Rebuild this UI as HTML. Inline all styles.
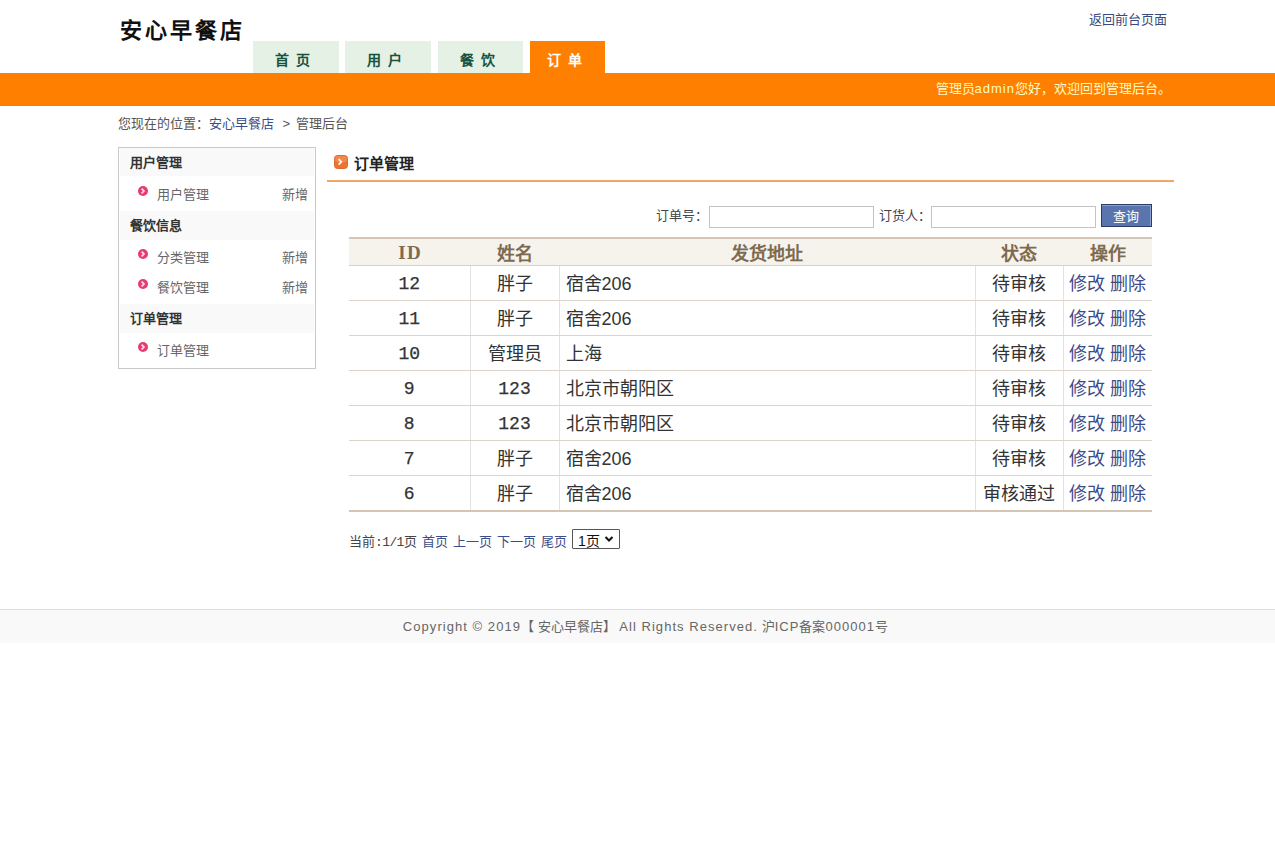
<!DOCTYPE html>
<html lang="zh-CN"><head><meta charset="utf-8"><title>安心早餐店</title>
<style>
*{margin:0;padding:0;box-sizing:border-box}
html,body{width:1275px;height:852px;background:#fff;overflow:hidden}
body{font-family:"Liberation Sans",sans-serif;font-size:13px;color:#333;position:relative}
.abs{position:absolute;white-space:nowrap}
#logo{left:120px;top:16px;font-size:22px;font-weight:bold;letter-spacing:3px;color:#111;line-height:30px}
.tab{position:absolute;top:41px;height:32px;background:#e4f1e4;color:#17523f;font-weight:bold;font-size:14px;letter-spacing:7px;text-align:center;line-height:38px;padding-left:0}
.tab.on{background:#ff8000;color:#fff}
#toplink{left:1089px;top:11px;color:#3b4a7c;font-size:13px;line-height:18px}
#bar{left:0;top:73px;width:1275px;height:33px;background:#ff8000}
#welcome{right:104px;top:81px;color:#fffac0;font-size:13px;line-height:16px}
#crumb{left:118px;top:115px;color:#555;line-height:18px}
#crumb a{color:#3b4c8a;text-decoration:none}
#side{left:118px;top:147px;width:198px;height:222px;border:1px solid #c9c9c9;padding:0 1px}
.sh{height:29px;background:#f9f9f9;font-weight:bold;color:#333;line-height:30px;padding-left:10px}
.ul{padding:2px 0}
.li{height:30px;line-height:32px;position:relative;color:#666;padding-left:37px}
.li .add{position:absolute;right:6px;top:0;color:#666}
.li .dot{position:absolute;left:18px;top:7px;width:10px;height:10px}
#title{left:354px;top:153px;font-size:15px;font-weight:bold;color:#222;line-height:22px}
#ticon{left:334px;top:155px;width:14px;height:14px}
#uline{left:327px;top:180px;width:847px;height:2px;background:#f0a765}
.lbl{top:207px;color:#444;line-height:18px}
.inp{top:206px;width:165px;height:22px;border:1px solid #c3c3c3;background:#fff}
#btn{left:1101px;top:204px;width:51px;height:23px;background:#5a75ad;border:1px solid #2c3d6a;box-shadow:inset -1px 1px 0 #8aa0cc;color:#fff;text-align:center;line-height:23px;padding-right:2px;font-size:13px}
#tbl{left:349px;top:237px;width:803px;border-collapse:collapse;table-layout:fixed;border-top:2px solid #d4c5b5;border-bottom:2px solid #d4c5b5}
#tbl th{height:27px;background:#f6f3ed;color:#7d6b50;font-size:18px;font-weight:bold;border-bottom:1px solid #d9d1c9;padding:0}
#tbl td{height:35px;border-bottom:1px solid #dad4cd;border-left:1px solid #e2e2e2;font-size:18px;color:#333;text-align:center;padding:0 0 2px}
#tbl td:first-child{border-left:none}
#tbl tr.last td{height:35px;border-bottom:none}
#tbl th.sid{font-family:"Liberation Serif",serif;font-size:19px}
#tbl td.idc{font-family:"Liberation Mono",monospace;font-size:18px;padding:2px 0 0;-webkit-text-stroke:0.25px #333}
#tbl td.addr{text-align:left;padding-left:6px}
#tbl a{color:#3b4c8a;text-decoration:none}
.pg{top:533px;color:#444;line-height:18px}
.pa{color:#3b4c8a}
#sel{left:572px;top:529px;width:48px;height:20px;border:1px solid #555;border-radius:1px;background:#fff}
.l{letter-spacing:1.05px}
#foot{left:0;top:609px;width:1275px;height:34px;padding-left:16px;background:#f9f9f9;border-top:1px solid #dedede;text-align:center;color:#666;line-height:34px;font-size:13px}
</style></head><body>
<div class="abs" id="logo">安心早餐店</div>
<div class="tab" style="left:253px;width:86px">首页</div>
<div class="tab" style="left:345px;width:86px">用户</div>
<div class="tab" style="left:438px;width:85px">餐饮</div>
<div class="tab on" style="left:530px;width:75px">订单</div>
<div class="abs" id="toplink">返回前台页面</div>
<div class="abs" id="bar"></div>
<div class="abs" id="welcome">管理员<span style="letter-spacing:1px">admin</span>您好，欢迎回到管理后台。</div>
<div class="abs" id="crumb">您现在的位置：<a>安心早餐店</a><span style="margin:0 2px 0 5px"> &gt; </span>管理后台</div>

<div class="abs" id="side">
  <div class="sh" style="height:28px;line-height:29px">用户管理</div>
  <div class="ul" style="padding-top:3px"><div class="li"><svg class="dot" viewBox="0 0 10 10"><circle cx="5" cy="5" r="5" fill="#e63c72"/><path d="M3.6 2.6 L6 5 L3.6 7.4" stroke="#fde" stroke-width="1.7" fill="none"/></svg>用户管理<span class="add">新增</span></div></div>
  <div class="sh">餐饮信息</div>
  <div class="ul"><div class="li"><svg class="dot" viewBox="0 0 10 10"><circle cx="5" cy="5" r="5" fill="#e63c72"/><path d="M3.6 2.6 L6 5 L3.6 7.4" stroke="#fde" stroke-width="1.7" fill="none"/></svg>分类管理<span class="add">新增</span></div>
  <div class="li"><svg class="dot" viewBox="0 0 10 10"><circle cx="5" cy="5" r="5" fill="#e63c72"/><path d="M3.6 2.6 L6 5 L3.6 7.4" stroke="#fde" stroke-width="1.7" fill="none"/></svg>餐饮管理<span class="add">新增</span></div></div>
  <div class="sh">订单管理</div>
  <div class="ul"><div class="li"><svg class="dot" viewBox="0 0 10 10"><circle cx="5" cy="5" r="5" fill="#e63c72"/><path d="M3.6 2.6 L6 5 L3.6 7.4" stroke="#fde" stroke-width="1.7" fill="none"/></svg>订单管理</div></div>
</div>

<svg class="abs" id="ticon" viewBox="0 0 14 14"><rect x="0.5" y="0.5" width="13" height="13" rx="3" fill="#ec7230" stroke="#dc6a30" stroke-width="1"/><rect x="1" y="1" width="12" height="6" rx="2.5" fill="#f59a60" opacity="0.6"/><path d="M4.6 4.2 L7.3 6.9 L4.6 9.6" stroke="#fff6ea" stroke-width="1.9" fill="none"/></svg>
<div class="abs" id="title">订单管理</div>
<div class="abs" id="uline"></div>

<div class="abs lbl" style="left:656px">订单号：</div>
<div class="abs inp" style="left:709px"></div>
<div class="abs lbl" style="left:879px">订货人：</div>
<div class="abs inp" style="left:931px"></div>
<div class="abs" id="btn">查询</div>

<table class="abs" id="tbl">
<colgroup><col style="width:121px"><col style="width:89px"><col style="width:416px"><col style="width:88px"><col style="width:89px"></colgroup>
<tr><th class="sid"><span style="position:relative;top:1px;letter-spacing:1.5px;margin-left:1.5px">ID</span></th><th>姓名</th><th>发货地址</th><th>状态</th><th>操作</th></tr>
<tr><td class="idc">12</td><td>胖子</td><td class="addr">宿舍206</td><td>待审核</td><td><a>修改</a> <a>删除</a></td></tr>
<tr><td class="idc">11</td><td>胖子</td><td class="addr">宿舍206</td><td>待审核</td><td><a>修改</a> <a>删除</a></td></tr>
<tr><td class="idc">10</td><td>管理员</td><td class="addr">上海</td><td>待审核</td><td><a>修改</a> <a>删除</a></td></tr>
<tr><td class="idc">9</td><td class="idc">123</td><td class="addr">北京市朝阳区</td><td>待审核</td><td><a>修改</a> <a>删除</a></td></tr>
<tr><td class="idc">8</td><td class="idc">123</td><td class="addr">北京市朝阳区</td><td>待审核</td><td><a>修改</a> <a>删除</a></td></tr>
<tr><td class="idc">7</td><td>胖子</td><td class="addr">宿舍206</td><td>待审核</td><td><a>修改</a> <a>删除</a></td></tr>
<tr class="last"><td class="idc">6</td><td>胖子</td><td class="addr">宿舍206</td><td>审核通过</td><td><a>修改</a> <a>删除</a></td></tr>
</table>

<div class="abs pg" style="left:349px">当前<span style="font-family:'Liberation Mono',monospace;letter-spacing:-0.6px">:1/1</span>页</div>
<div class="abs pg pa" style="left:422px">首页</div>
<div class="abs pg pa" style="left:453px">上一页</div>
<div class="abs pg pa" style="left:497px">下一页</div>
<div class="abs pg pa" style="left:541px">尾页</div>
<div class="abs" id="sel"><span style="position:absolute;left:5px;top:2px;color:#111;font-size:14px;line-height:18px">1页</span><svg style="position:absolute;left:30.5px;top:5px" width="10" height="8" viewBox="0 0 10 8"><path d="M1.5 2 L5 5.5 L8.5 2" stroke="#111" stroke-width="2" fill="none"/></svg></div>

<div class="abs" id="foot"><span class="l">Copyright © 2019</span>【 安心早餐店】 <span class="l">All Rights Reserved.</span> 沪<span class="l">ICP</span>备案<span class="l">000001</span>号</div>
</body></html>
